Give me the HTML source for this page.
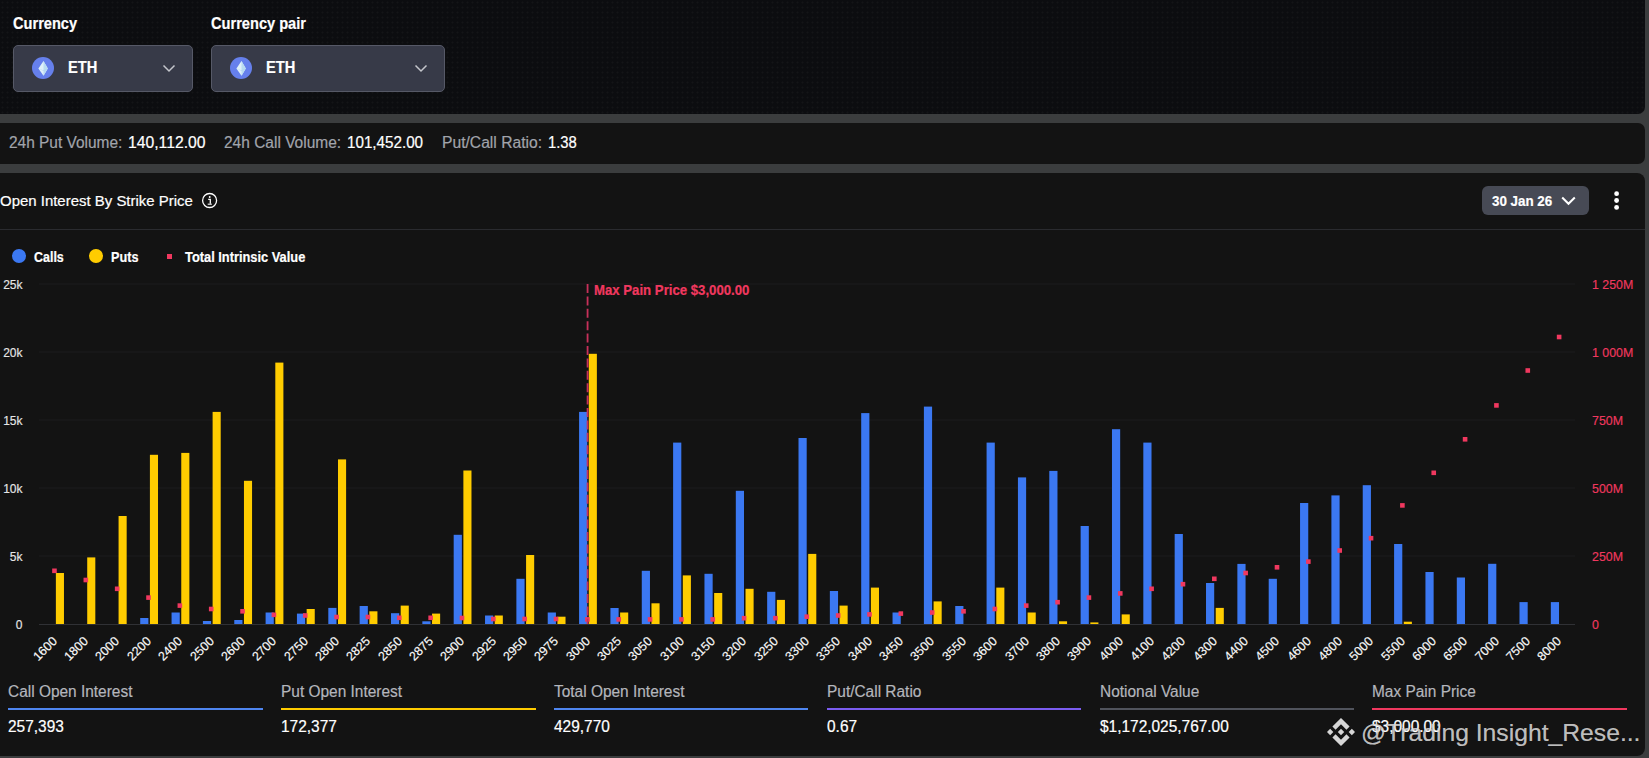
<!DOCTYPE html>
<html><head><meta charset="utf-8"><style>
*{margin:0;padding:0;box-sizing:border-box;}
html,body{width:1649px;height:758px;overflow:hidden;background:#3b3d3e;font-family:"Liberation Sans",sans-serif;position:relative;}
.abs{position:absolute;}
svg{display:block;}
.t{position:absolute;white-space:nowrap;line-height:1;transform-origin:0 0;-webkit-text-stroke:0.2px currentColor;}
#p1{position:absolute;left:-10px;top:-10px;width:1655px;height:124px;background-color:#0c0d10;background-image:radial-gradient(circle at 2.5px 2.5px, rgba(255,255,255,0.03) 0.8px, transparent 1.2px);background-size:5px 5px;border-radius:0 0 7px 7px;}
#p2{position:absolute;left:-10px;top:123px;width:1655px;height:41px;background:#131313;border-radius:7px;}
#p3{position:absolute;left:-10px;top:173px;width:1655px;height:582.7px;background:#131313;border-radius:8px;}
.dd{position:absolute;top:45px;height:47px;background:#373a48;border:1px solid #565967;border-radius:5px;}
.sep{position:absolute;left:0;top:229px;width:1645px;height:1px;background:#2a2b2f;}
.dot{position:absolute;width:13.8px;height:13.8px;border-radius:50%;}
.yl{position:absolute;left:0;width:22.5px;text-align:right;color:#e6e6e6;font-size:12px;line-height:14px;-webkit-text-stroke:0.15px currentColor;}
.rl{position:absolute;left:1592px;color:#f0385f;font-size:12.4px;line-height:14px;white-space:nowrap;-webkit-text-stroke:0.15px currentColor;}
.xl{position:absolute;top:632.2px;width:60px;margin-left:-60px;text-align:right;color:#fafafa;font-size:12.5px;line-height:14px;-webkit-text-stroke:0.15px currentColor;transform-origin:100% 50%;transform:rotate(-45deg);}
.btn{position:absolute;left:1482px;top:186px;width:107px;height:29px;background:#474a55;border-radius:6px;}
</style></head><body>
<div id="p1"></div><div id="p2"></div><div id="p3"></div>
<div class="t" style="left:12.60px;top:15.86px;font-size:16px;color:#fff;font-weight:bold;transform:scaleX(0.912);">Currency</div>
<div class="t" style="left:210.60px;top:15.86px;font-size:16px;color:#fff;font-weight:bold;transform:scaleX(0.913);">Currency pair</div>
<div class="dd" style="left:13px;width:180px"></div>
<div class="abs" style="left:32.05px;top:57px"><svg width="22" height="22" viewBox="0 0 22 22"><circle cx="11" cy="11" r="11" fill="#6680ec"/><path d="M11.5 4 L15.8 11.4 L11.5 18.8 L6.4 11.4 Z" fill="#dff1fa"/><path d="M11.5 4 L15.8 11.4 L11.5 18.8 Z" fill="#b9dcf1"/><path d="M6.4 11.4 L11.5 14 L15.8 11.4 L11.5 13.2Z" fill="#a8cdec" opacity="0.6"/></svg></div>
<div class="t" style="left:67.70px;top:58.81px;font-size:17px;color:#fff;font-weight:bold;transform:scaleX(0.862);">ETH</div>
<div class="abs" style="left:162px;top:64px"><svg width="14" height="9" viewBox="0 0 14 9"><path d="M1.5 1.5 L7 7 L12.5 1.5" fill="none" stroke="#c4c6cc" stroke-width="1.5"/></svg></div>
<div class="dd" style="left:211px;width:234px"></div>
<div class="abs" style="left:230.05px;top:57px"><svg width="22" height="22" viewBox="0 0 22 22"><circle cx="11" cy="11" r="11" fill="#6680ec"/><path d="M11.5 4 L15.8 11.4 L11.5 18.8 L6.4 11.4 Z" fill="#dff1fa"/><path d="M11.5 4 L15.8 11.4 L11.5 18.8 Z" fill="#b9dcf1"/><path d="M6.4 11.4 L11.5 14 L15.8 11.4 L11.5 13.2Z" fill="#a8cdec" opacity="0.6"/></svg></div>
<div class="t" style="left:265.70px;top:58.81px;font-size:17px;color:#fff;font-weight:bold;transform:scaleX(0.862);">ETH</div>
<div class="abs" style="left:414px;top:64px"><svg width="14" height="9" viewBox="0 0 14 9"><path d="M1.5 1.5 L7 7 L12.5 1.5" fill="none" stroke="#c4c6cc" stroke-width="1.5"/></svg></div>
<div class="t" style="left:8.70px;top:134.86px;font-size:16px;color:#a1a4ab;transform:scaleX(0.965);">24h Put Volume:</div>
<div class="t" style="left:128.00px;top:134.86px;font-size:16px;color:#fff;transform:scaleX(0.982);">140,112.00</div>
<div class="t" style="left:224.10px;top:134.86px;font-size:16px;color:#a1a4ab;transform:scaleX(0.968);">24h Call Volume:</div>
<div class="t" style="left:346.90px;top:134.86px;font-size:16px;color:#fff;transform:scaleX(0.95);">101,452.00</div>
<div class="t" style="left:442.30px;top:134.86px;font-size:16px;color:#a1a4ab;transform:scaleX(0.978);">Put/Call Ratio:</div>
<div class="t" style="left:548.20px;top:134.86px;font-size:16px;color:#fff;transform:scaleX(0.926);">1.38</div>
<div class="t" style="left:0.00px;top:193.20px;font-size:15px;color:#fff;transform:scaleX(0.997);">Open Interest By Strike Price</div>
<svg class="abs" style="left:201px;top:192.3px" width="17" height="17" viewBox="0 0 17 17"><circle cx="8.6" cy="8.5" r="7.0" fill="none" stroke="#fff" stroke-width="1.3"/><circle cx="8.7" cy="5.0" r="0.95" fill="#fff"/><path d="M7.2 7.3 H9.3 V11.7" fill="none" stroke="#fff" stroke-width="1.3"/><path d="M6.7 12.2 H10.8" fill="none" stroke="#fff" stroke-width="1.1"/></svg>
<div class="btn"></div>
<div class="t" style="left:1491.70px;top:193.67px;font-size:14.8px;color:#fff;font-weight:bold;transform:scaleX(0.904);">30 Jan 26</div>
<svg class="abs" style="left:1561px;top:196px" width="15" height="10" viewBox="0 0 15 10"><path d="M1.2 1.5 L7.5 7.8 L13.8 1.5" fill="none" stroke="#fff" stroke-width="2"/></svg>
<svg class="abs" style="left:1612px;top:190px" width="10" height="21" viewBox="0 0 10 21"><circle cx="4.6" cy="3.7" r="2.4" fill="#fff"/><circle cx="4.6" cy="10.5" r="2.4" fill="#fff"/><circle cx="4.6" cy="17.4" r="2.4" fill="#fff"/></svg>
<div class="sep"></div>
<div class="dot" style="left:12.2px;top:248.9px;background:#3b78f2"></div>
<div class="t" style="left:34.20px;top:249.73px;font-size:14.5px;color:#fff;font-weight:bold;transform:scaleX(0.859);">Calls</div>
<div class="dot" style="left:88.8px;top:248.9px;background:#ffcc00"></div>
<div class="t" style="left:110.60px;top:249.73px;font-size:14.5px;color:#fff;font-weight:bold;transform:scaleX(0.873);">Puts</div>
<div class="abs" style="left:167px;top:254.4px;width:5px;height:5px;background:#f0385f"></div>
<div class="t" style="left:184.80px;top:249.73px;font-size:14.5px;color:#fff;font-weight:bold;transform:scaleX(0.885);">Total Intrinsic Value</div>
<div class="yl" style="top:277.8px">25k</div><div class="yl" style="top:345.8px">20k</div><div class="yl" style="top:413.8px">15k</div><div class="yl" style="top:481.8px">10k</div><div class="yl" style="top:549.8px">5k</div><div class="yl" style="top:617.8px">0</div>
<div class="rl" style="top:278.2px">1 250M</div><div class="rl" style="top:346.2px">1 000M</div><div class="rl" style="top:414.2px">750M</div><div class="rl" style="top:482.2px">500M</div><div class="rl" style="top:550.2px">250M</div><div class="rl" style="top:618.2px">0</div>
<svg class="abs" style="left:0;top:0" width="1649" height="758">
<line x1="39.0" y1="284" x2="1575.0" y2="284" stroke="#1c1d1f" stroke-width="1"/>
<line x1="39.0" y1="352" x2="1575.0" y2="352" stroke="#1c1d1f" stroke-width="1"/>
<line x1="39.0" y1="420" x2="1575.0" y2="420" stroke="#1c1d1f" stroke-width="1"/>
<line x1="39.0" y1="488" x2="1575.0" y2="488" stroke="#1c1d1f" stroke-width="1"/>
<line x1="39.0" y1="556" x2="1575.0" y2="556" stroke="#1c1d1f" stroke-width="1"/>
<line x1="39.0" y1="624.5" x2="1575.0" y2="624.5" stroke="#303135" stroke-width="1"/>
<rect x="55.87" y="573.00" width="8.1" height="51.00" fill="#ffcc00"/>
<rect x="87.22" y="557.40" width="8.1" height="66.60" fill="#ffcc00"/>
<rect x="118.57" y="516.00" width="8.1" height="108.00" fill="#ffcc00"/>
<rect x="140.21" y="618.00" width="8.2" height="6.00" fill="#3b78f2"/>
<rect x="149.91" y="454.80" width="8.1" height="169.20" fill="#ffcc00"/>
<rect x="171.56" y="612.50" width="8.2" height="11.50" fill="#3b78f2"/>
<rect x="181.26" y="452.90" width="8.1" height="171.10" fill="#ffcc00"/>
<rect x="202.91" y="621.00" width="8.2" height="3.00" fill="#3b78f2"/>
<rect x="212.61" y="411.90" width="8.1" height="212.10" fill="#ffcc00"/>
<rect x="234.26" y="620.00" width="8.2" height="4.00" fill="#3b78f2"/>
<rect x="243.96" y="480.80" width="8.1" height="143.20" fill="#ffcc00"/>
<rect x="265.60" y="612.50" width="8.2" height="11.50" fill="#3b78f2"/>
<rect x="275.30" y="362.60" width="8.1" height="261.40" fill="#ffcc00"/>
<rect x="296.95" y="613.60" width="8.2" height="10.40" fill="#3b78f2"/>
<rect x="306.65" y="609.00" width="8.1" height="15.00" fill="#ffcc00"/>
<rect x="328.30" y="607.90" width="8.2" height="16.10" fill="#3b78f2"/>
<rect x="338.00" y="459.40" width="8.1" height="164.60" fill="#ffcc00"/>
<rect x="359.64" y="606.00" width="8.2" height="18.00" fill="#3b78f2"/>
<rect x="369.34" y="611.30" width="8.1" height="12.70" fill="#ffcc00"/>
<rect x="390.99" y="613.20" width="8.2" height="10.80" fill="#3b78f2"/>
<rect x="400.69" y="605.60" width="8.1" height="18.40" fill="#ffcc00"/>
<rect x="422.34" y="621.30" width="8.2" height="2.70" fill="#3b78f2"/>
<rect x="432.04" y="613.60" width="8.1" height="10.40" fill="#ffcc00"/>
<rect x="453.68" y="534.80" width="8.2" height="89.20" fill="#3b78f2"/>
<rect x="463.38" y="470.50" width="8.1" height="153.50" fill="#ffcc00"/>
<rect x="485.03" y="615.50" width="8.2" height="8.50" fill="#3b78f2"/>
<rect x="494.73" y="615.50" width="8.1" height="8.50" fill="#ffcc00"/>
<rect x="516.38" y="578.80" width="8.2" height="45.20" fill="#3b78f2"/>
<rect x="526.08" y="555.00" width="8.1" height="69.00" fill="#ffcc00"/>
<rect x="547.72" y="612.50" width="8.2" height="11.50" fill="#3b78f2"/>
<rect x="557.42" y="616.70" width="8.1" height="7.30" fill="#ffcc00"/>
<rect x="579.07" y="411.90" width="8.2" height="212.10" fill="#3b78f2"/>
<rect x="588.77" y="353.80" width="8.1" height="270.20" fill="#ffcc00"/>
<rect x="610.42" y="608.00" width="8.2" height="16.00" fill="#3b78f2"/>
<rect x="620.12" y="612.50" width="8.1" height="11.50" fill="#ffcc00"/>
<rect x="641.77" y="570.80" width="8.2" height="53.20" fill="#3b78f2"/>
<rect x="651.47" y="603.30" width="8.1" height="20.70" fill="#ffcc00"/>
<rect x="673.11" y="442.60" width="8.2" height="181.40" fill="#3b78f2"/>
<rect x="682.81" y="575.40" width="8.1" height="48.60" fill="#ffcc00"/>
<rect x="704.46" y="573.80" width="8.2" height="50.20" fill="#3b78f2"/>
<rect x="714.16" y="593.00" width="8.1" height="31.00" fill="#ffcc00"/>
<rect x="735.81" y="490.80" width="8.2" height="133.20" fill="#3b78f2"/>
<rect x="745.51" y="588.80" width="8.1" height="35.20" fill="#ffcc00"/>
<rect x="767.15" y="591.80" width="8.2" height="32.20" fill="#3b78f2"/>
<rect x="776.85" y="599.90" width="8.1" height="24.10" fill="#ffcc00"/>
<rect x="798.50" y="438.00" width="8.2" height="186.00" fill="#3b78f2"/>
<rect x="808.20" y="553.90" width="8.1" height="70.10" fill="#ffcc00"/>
<rect x="829.85" y="591.00" width="8.2" height="33.00" fill="#3b78f2"/>
<rect x="839.55" y="605.60" width="8.1" height="18.40" fill="#ffcc00"/>
<rect x="861.19" y="413.10" width="8.2" height="210.90" fill="#3b78f2"/>
<rect x="870.89" y="587.60" width="8.1" height="36.40" fill="#ffcc00"/>
<rect x="892.54" y="612.50" width="8.2" height="11.50" fill="#3b78f2"/>
<rect x="923.89" y="406.60" width="8.2" height="217.40" fill="#3b78f2"/>
<rect x="933.59" y="601.40" width="8.1" height="22.60" fill="#ffcc00"/>
<rect x="955.23" y="606.00" width="8.2" height="18.00" fill="#3b78f2"/>
<rect x="986.58" y="442.60" width="8.2" height="181.40" fill="#3b78f2"/>
<rect x="996.28" y="587.60" width="8.1" height="36.40" fill="#ffcc00"/>
<rect x="1017.93" y="477.40" width="8.2" height="146.60" fill="#3b78f2"/>
<rect x="1027.63" y="612.50" width="8.1" height="11.50" fill="#ffcc00"/>
<rect x="1049.28" y="470.90" width="8.2" height="153.10" fill="#3b78f2"/>
<rect x="1058.98" y="621.30" width="8.1" height="2.70" fill="#ffcc00"/>
<rect x="1080.62" y="526.00" width="8.2" height="98.00" fill="#3b78f2"/>
<rect x="1090.32" y="622.40" width="8.1" height="1.60" fill="#ffcc00"/>
<rect x="1111.97" y="429.20" width="8.2" height="194.80" fill="#3b78f2"/>
<rect x="1121.67" y="614.40" width="8.1" height="9.60" fill="#ffcc00"/>
<rect x="1143.32" y="442.60" width="8.2" height="181.40" fill="#3b78f2"/>
<rect x="1174.66" y="534.00" width="8.2" height="90.00" fill="#3b78f2"/>
<rect x="1206.01" y="583.00" width="8.2" height="41.00" fill="#3b78f2"/>
<rect x="1215.71" y="607.90" width="8.1" height="16.10" fill="#ffcc00"/>
<rect x="1237.36" y="563.90" width="8.2" height="60.10" fill="#3b78f2"/>
<rect x="1268.70" y="578.80" width="8.2" height="45.20" fill="#3b78f2"/>
<rect x="1300.05" y="503.00" width="8.2" height="121.00" fill="#3b78f2"/>
<rect x="1331.40" y="495.40" width="8.2" height="128.60" fill="#3b78f2"/>
<rect x="1362.74" y="485.20" width="8.2" height="138.80" fill="#3b78f2"/>
<rect x="1394.09" y="544.00" width="8.2" height="80.00" fill="#3b78f2"/>
<rect x="1403.79" y="621.70" width="8.1" height="2.30" fill="#ffcc00"/>
<rect x="1425.44" y="572.00" width="8.2" height="52.00" fill="#3b78f2"/>
<rect x="1456.79" y="577.50" width="8.2" height="46.50" fill="#3b78f2"/>
<rect x="1488.13" y="563.80" width="8.2" height="60.20" fill="#3b78f2"/>
<rect x="1519.48" y="602.10" width="8.2" height="21.90" fill="#3b78f2"/>
<rect x="1550.83" y="602.10" width="8.2" height="21.90" fill="#3b78f2"/>
<rect x="52.17" y="568.50" width="4.6" height="4.6" fill="#f0385f"/>
<rect x="83.52" y="577.70" width="4.6" height="4.6" fill="#f0385f"/>
<rect x="114.87" y="586.50" width="4.6" height="4.6" fill="#f0385f"/>
<rect x="146.21" y="595.30" width="4.6" height="4.6" fill="#f0385f"/>
<rect x="177.56" y="603.30" width="4.6" height="4.6" fill="#f0385f"/>
<rect x="208.91" y="606.70" width="4.6" height="4.6" fill="#f0385f"/>
<rect x="240.26" y="609.00" width="4.6" height="4.6" fill="#f0385f"/>
<rect x="271.60" y="612.50" width="4.6" height="4.6" fill="#f0385f"/>
<rect x="302.95" y="613.20" width="4.6" height="4.6" fill="#f0385f"/>
<rect x="334.30" y="614.70" width="4.6" height="4.6" fill="#f0385f"/>
<rect x="365.64" y="614.70" width="4.6" height="4.6" fill="#f0385f"/>
<rect x="396.99" y="615.50" width="4.6" height="4.6" fill="#f0385f"/>
<rect x="428.34" y="615.50" width="4.6" height="4.6" fill="#f0385f"/>
<rect x="459.68" y="615.70" width="4.6" height="4.6" fill="#f0385f"/>
<rect x="491.03" y="616.70" width="4.6" height="4.6" fill="#f0385f"/>
<rect x="522.38" y="616.70" width="4.6" height="4.6" fill="#f0385f"/>
<rect x="553.72" y="616.70" width="4.6" height="4.6" fill="#f0385f"/>
<rect x="585.07" y="617.10" width="4.6" height="4.6" fill="#f0385f"/>
<rect x="616.42" y="617.10" width="4.6" height="4.6" fill="#f0385f"/>
<rect x="647.77" y="617.10" width="4.6" height="4.6" fill="#f0385f"/>
<rect x="679.11" y="617.10" width="4.6" height="4.6" fill="#f0385f"/>
<rect x="710.46" y="617.10" width="4.6" height="4.6" fill="#f0385f"/>
<rect x="741.81" y="615.90" width="4.6" height="4.6" fill="#f0385f"/>
<rect x="773.15" y="615.90" width="4.6" height="4.6" fill="#f0385f"/>
<rect x="804.50" y="614.40" width="4.6" height="4.6" fill="#f0385f"/>
<rect x="835.85" y="613.20" width="4.6" height="4.6" fill="#f0385f"/>
<rect x="867.19" y="612.10" width="4.6" height="4.6" fill="#f0385f"/>
<rect x="898.54" y="611.30" width="4.6" height="4.6" fill="#f0385f"/>
<rect x="929.89" y="610.20" width="4.6" height="4.6" fill="#f0385f"/>
<rect x="961.23" y="609.00" width="4.6" height="4.6" fill="#f0385f"/>
<rect x="992.58" y="606.70" width="4.6" height="4.6" fill="#f0385f"/>
<rect x="1023.93" y="603.30" width="4.6" height="4.6" fill="#f0385f"/>
<rect x="1055.28" y="599.90" width="4.6" height="4.6" fill="#f0385f"/>
<rect x="1086.62" y="595.30" width="4.6" height="4.6" fill="#f0385f"/>
<rect x="1117.97" y="591.10" width="4.6" height="4.6" fill="#f0385f"/>
<rect x="1149.32" y="586.50" width="4.6" height="4.6" fill="#f0385f"/>
<rect x="1180.66" y="581.90" width="4.6" height="4.6" fill="#f0385f"/>
<rect x="1212.01" y="576.50" width="4.6" height="4.6" fill="#f0385f"/>
<rect x="1243.36" y="570.70" width="4.6" height="4.6" fill="#f0385f"/>
<rect x="1274.70" y="565.00" width="4.6" height="4.6" fill="#f0385f"/>
<rect x="1306.05" y="559.30" width="4.6" height="4.6" fill="#f0385f"/>
<rect x="1337.40" y="548.20" width="4.6" height="4.6" fill="#f0385f"/>
<rect x="1368.74" y="535.90" width="4.6" height="4.6" fill="#f0385f"/>
<rect x="1400.09" y="503.10" width="4.6" height="4.6" fill="#f0385f"/>
<rect x="1431.44" y="470.50" width="4.6" height="4.6" fill="#f0385f"/>
<rect x="1462.79" y="437.00" width="4.6" height="4.6" fill="#f0385f"/>
<rect x="1494.13" y="403.10" width="4.6" height="4.6" fill="#f0385f"/>
<rect x="1525.48" y="368.20" width="4.6" height="4.6" fill="#f0385f"/>
<rect x="1556.83" y="334.70" width="4.6" height="4.6" fill="#f0385f"/>
<line x1="587.57" y1="284" x2="587.57" y2="624" stroke="#c8305a" stroke-width="1.8" stroke-dasharray="9 3.4"/>
</svg>
<div class="t" style="left:593.60px;top:283.15px;font-size:14px;color:#f0385f;font-weight:bold;transform:scaleX(0.942);">Max Pain Price $3,000.00</div>
<div class="xl" style="left:54.77px">1600</div>
<div class="xl" style="left:86.12px">1800</div>
<div class="xl" style="left:117.47px">2000</div>
<div class="xl" style="left:148.81px">2200</div>
<div class="xl" style="left:180.16px">2400</div>
<div class="xl" style="left:211.51px">2500</div>
<div class="xl" style="left:242.86px">2600</div>
<div class="xl" style="left:274.20px">2700</div>
<div class="xl" style="left:305.55px">2750</div>
<div class="xl" style="left:336.90px">2800</div>
<div class="xl" style="left:368.24px">2825</div>
<div class="xl" style="left:399.59px">2850</div>
<div class="xl" style="left:430.94px">2875</div>
<div class="xl" style="left:462.28px">2900</div>
<div class="xl" style="left:493.63px">2925</div>
<div class="xl" style="left:524.98px">2950</div>
<div class="xl" style="left:556.32px">2975</div>
<div class="xl" style="left:587.67px">3000</div>
<div class="xl" style="left:619.02px">3025</div>
<div class="xl" style="left:650.37px">3050</div>
<div class="xl" style="left:681.71px">3100</div>
<div class="xl" style="left:713.06px">3150</div>
<div class="xl" style="left:744.41px">3200</div>
<div class="xl" style="left:775.75px">3250</div>
<div class="xl" style="left:807.10px">3300</div>
<div class="xl" style="left:838.45px">3350</div>
<div class="xl" style="left:869.79px">3400</div>
<div class="xl" style="left:901.14px">3450</div>
<div class="xl" style="left:932.49px">3500</div>
<div class="xl" style="left:963.83px">3550</div>
<div class="xl" style="left:995.18px">3600</div>
<div class="xl" style="left:1026.53px">3700</div>
<div class="xl" style="left:1057.88px">3800</div>
<div class="xl" style="left:1089.22px">3900</div>
<div class="xl" style="left:1120.57px">4000</div>
<div class="xl" style="left:1151.92px">4100</div>
<div class="xl" style="left:1183.26px">4200</div>
<div class="xl" style="left:1214.61px">4300</div>
<div class="xl" style="left:1245.96px">4400</div>
<div class="xl" style="left:1277.30px">4500</div>
<div class="xl" style="left:1308.65px">4600</div>
<div class="xl" style="left:1340.00px">4800</div>
<div class="xl" style="left:1371.34px">5000</div>
<div class="xl" style="left:1402.69px">5500</div>
<div class="xl" style="left:1434.04px">6000</div>
<div class="xl" style="left:1465.39px">6500</div>
<div class="xl" style="left:1496.73px">7000</div>
<div class="xl" style="left:1528.08px">7500</div>
<div class="xl" style="left:1559.43px">8000</div>
<div class="t" style="left:8.30px;top:684.06px;font-size:16px;color:#b4b6bc;transform:scaleX(0.965);">Call Open Interest</div>
<div class="abs" style="left:8.3px;top:708px;width:254.5px;height:2px;background:#4f86f0"></div>
<div class="t" style="left:8.30px;top:719.06px;font-size:16px;color:#fff;transform:scaleX(0.965);">257,393</div>
<div class="t" style="left:281.10px;top:684.06px;font-size:16px;color:#b4b6bc;transform:scaleX(0.965);">Put Open Interest</div>
<div class="abs" style="left:281.1px;top:708px;width:254.5px;height:2px;background:#ffcc00"></div>
<div class="t" style="left:281.10px;top:719.06px;font-size:16px;color:#fff;transform:scaleX(0.965);">172,377</div>
<div class="t" style="left:553.90px;top:684.06px;font-size:16px;color:#b4b6bc;transform:scaleX(0.965);">Total Open Interest</div>
<div class="abs" style="left:553.9px;top:708px;width:254.5px;height:2px;background:#4f86f0"></div>
<div class="t" style="left:553.90px;top:719.06px;font-size:16px;color:#fff;transform:scaleX(0.965);">429,770</div>
<div class="t" style="left:826.70px;top:684.06px;font-size:16px;color:#b4b6bc;transform:scaleX(0.965);">Put/Call Ratio</div>
<div class="abs" style="left:826.7px;top:708px;width:254.5px;height:2px;background:#7b5cf0"></div>
<div class="t" style="left:826.70px;top:719.06px;font-size:16px;color:#fff;transform:scaleX(0.965);">0.67</div>
<div class="t" style="left:1099.50px;top:684.06px;font-size:16px;color:#b4b6bc;transform:scaleX(0.965);">Notional Value</div>
<div class="abs" style="left:1099.5px;top:708px;width:254.5px;height:2px;background:#50535c"></div>
<div class="t" style="left:1099.50px;top:719.06px;font-size:16px;color:#fff;transform:scaleX(0.965);">$1,172,025,767.00</div>
<div class="t" style="left:1372.30px;top:684.06px;font-size:16px;color:#b4b6bc;transform:scaleX(0.965);">Max Pain Price</div>
<div class="abs" style="left:1372.3px;top:708px;width:254.5px;height:2px;background:#f0385f"></div>
<div class="t" style="left:1372.30px;top:719.06px;font-size:16px;color:#fff;transform:scaleX(0.965);">$3,000.00</div>

<svg class="abs" style="left:1327px;top:718.1px" width="28" height="28" viewBox="0 0 126.61 126.61"><path fill="#d6d6d6" d="M38.73 53.2L63.3 28.63 87.88 53.21 102.18 38.91 63.3 0 24.43 38.9 38.73 53.2z M0 63.31L14.3 49l14.3 14.3-14.3 14.3z M38.73 73.41L63.3 97.98 87.88 73.4 102.19 87.69 63.3 126.61 24.42 87.71 38.73 73.41z M98 63.31L112.3 49l14.3 14.3-14.3 14.3z M77.83 63.3L63.3 48.76 52.56 59.5 51.32 60.74 48.78 63.28 63.3 77.8 77.83 63.3z"/></svg>
<div class="t" style="left:1360.90px;top:720.68px;font-size:24px;color:rgba(214,214,214,0.9);transform:scaleX(1.029);">@Trading Insight_Rese...</div>
</body></html>
